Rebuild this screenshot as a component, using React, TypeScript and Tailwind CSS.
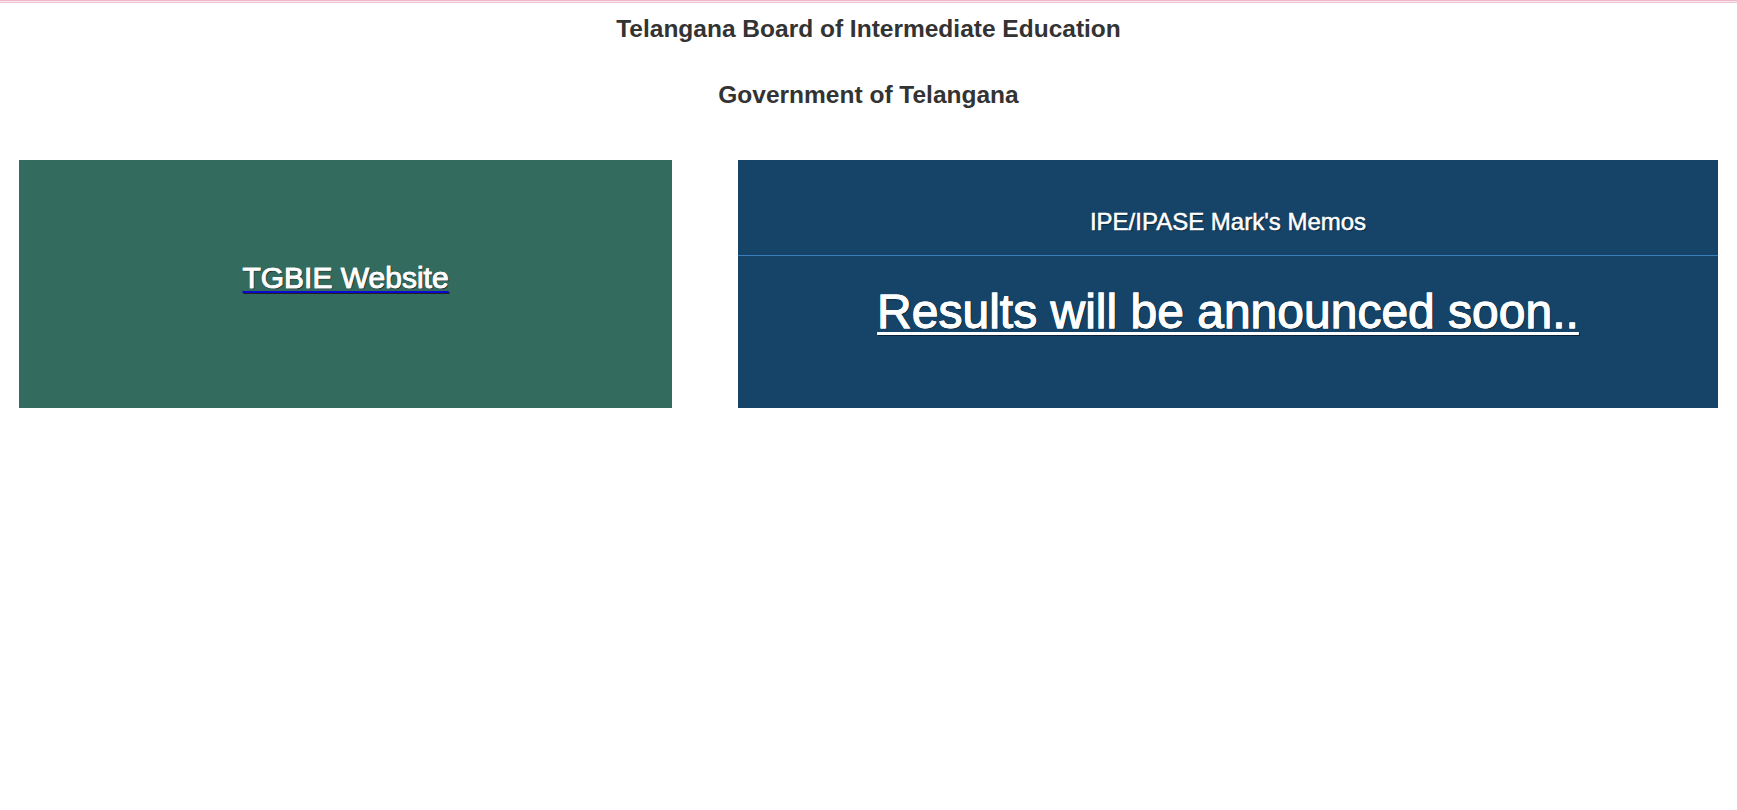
export default function App() {
  return (
    <div className="min-h-[810px] bg-white font-['Liberation_Sans',Arial,sans-serif]">
      <div className="h-[1px] bg-[#efb8c8]" />
      <div className="h-[1px] bg-[#fbe6ec]" />
      <div className="h-[1px] bg-[#f1c3d1]" />

      <h3 className="mt-[13px] text-center text-[24.5px] font-bold leading-[26px] text-[#333333]">
        Telangana Board of Intermediate Education
      </h3>
      <h3 className="mt-[40px] text-center text-[24.5px] font-bold leading-[26px] text-[#333333]">
        Government of Telangana
      </h3>

      <div className="mt-[52px] flex items-start px-[19px]">
        <div className="h-[248px] w-[653px] bg-[#346b5f] pt-[103px] text-center">
          <a
            href="#"
            className="text-[30px] leading-[30px] text-white underline decoration-[#0a0acc] decoration-2 underline-offset-[3px] [-webkit-text-stroke:0.6px_white] [text-shadow:1px_1px_1px_#222]"
          >
            TGBIE Website
          </a>
        </div>

        <div className="ml-[66px] h-[248px] w-[980px] bg-[#154468]">
          <div className="h-[96px] border-b border-[#3a7dc0] pt-[49px] text-center text-[24px] leading-[26px] text-white [-webkit-text-stroke:0.5px_white] [text-shadow:1px_1px_1px_#0a2238]">
            IPE/IPASE Mark&apos;s Memos
          </div>
          <div className="pt-[32px] text-center">
            <a
              href="#"
              className="text-[48px] leading-[48px] text-white underline decoration-[3px] underline-offset-[4px] [-webkit-text-stroke:0.8px_white] [text-shadow:1px_1px_1px_#0a2238]"
            >
              Results will be announced soon..
            </a>
          </div>
        </div>
      </div>
    </div>
  );
}
